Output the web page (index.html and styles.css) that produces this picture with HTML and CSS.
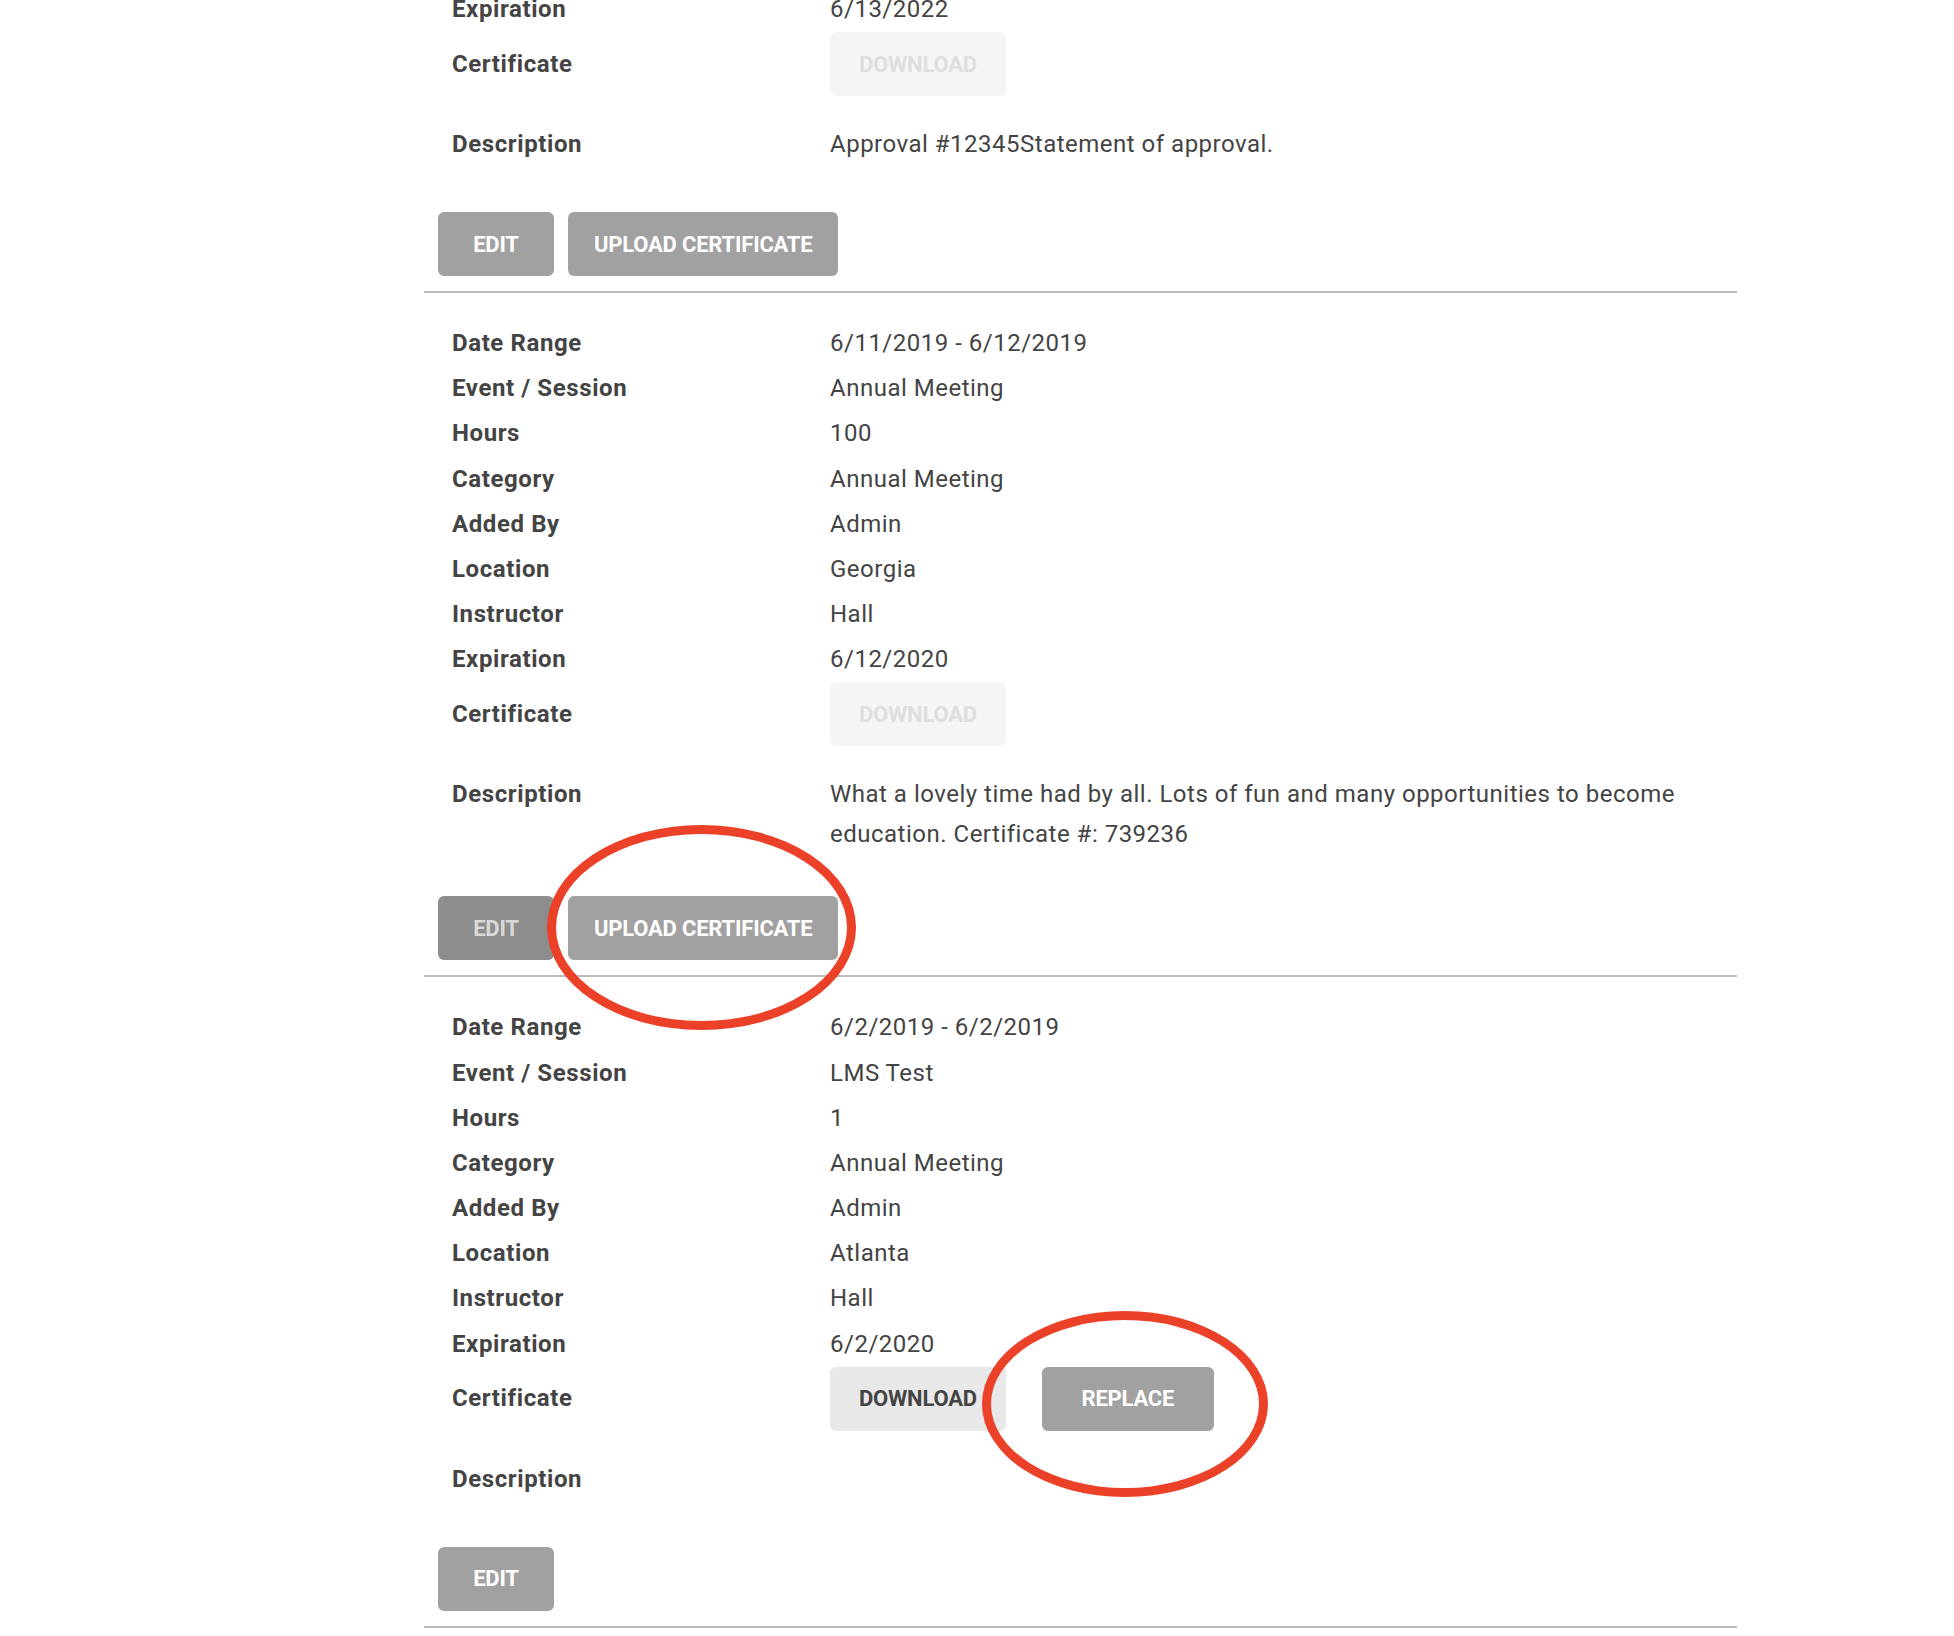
FILE: index.html
```html
<!DOCTYPE html>
<html>
<head>
	<title>Continuing Education Records</title>
	<link rel="stylesheet" href="styles.css">
</head>
<body>
	<div class="records">

		<div class="record first">
			<dl class="details">
				<div class="row"><dt>Expiration</dt><dd>6/13/2022</dd></div>
				<div class="row cert">
					<dt>Certificate</dt>
					<dd><button class="btn btn-light" disabled>Download</button></dd>
				</div>
				<div class="row desc"><dt>Description</dt><dd>Approval #12345Statement of approval.</dd></div>
			</dl>
			<div class="actions">
				<button class="btn btn-edit">Edit</button>
				<button class="btn">Upload Certificate</button>
			</div>
		</div>

		<div class="record">
			<dl class="details">
				<div class="row"><dt>Date Range</dt><dd>6/11/2019 - 6/12/2019</dd></div>
				<div class="row"><dt>Event / Session</dt><dd>Annual Meeting</dd></div>
				<div class="row"><dt>Hours</dt><dd>100</dd></div>
				<div class="row"><dt>Category</dt><dd>Annual Meeting</dd></div>
				<div class="row"><dt>Added By</dt><dd>Admin</dd></div>
				<div class="row"><dt>Location</dt><dd>Georgia</dd></div>
				<div class="row"><dt>Instructor</dt><dd>Hall</dd></div>
				<div class="row"><dt>Expiration</dt><dd>6/12/2020</dd></div>
				<div class="row cert">
					<dt>Certificate</dt>
					<dd><button class="btn btn-light" disabled>Download</button></dd>
				</div>
				<div class="row desc"><dt>Description</dt><dd>What a lovely time had by all. Lots of fun and many opportunities to become education. Certificate #: 739236</dd></div>
			</dl>
			<div class="actions">
				<button class="btn btn-edit pressed">Edit</button>
				<button class="btn">Upload Certificate<span class="ring ring-upload"></span></button>
			</div>
		</div>

		<div class="record">
			<dl class="details">
				<div class="row"><dt>Date Range</dt><dd>6/2/2019 - 6/2/2019</dd></div>
				<div class="row"><dt>Event / Session</dt><dd>LMS Test</dd></div>
				<div class="row"><dt>Hours</dt><dd>1</dd></div>
				<div class="row"><dt>Category</dt><dd>Annual Meeting</dd></div>
				<div class="row"><dt>Added By</dt><dd>Admin</dd></div>
				<div class="row"><dt>Location</dt><dd>Atlanta</dd></div>
				<div class="row"><dt>Instructor</dt><dd>Hall</dd></div>
				<div class="row"><dt>Expiration</dt><dd>6/2/2020</dd></div>
				<div class="row cert">
					<dt>Certificate</dt>
					<dd class="cert-btns">
						<button class="btn btn-light">Download</button>
						<button class="btn">Replace<span class="ring ring-replace"></span></button>
					</dd>
				</div>
				<div class="row desc"><dt>Description</dt><dd></dd></div>
			</dl>
			<div class="actions">
				<button class="btn btn-edit">Edit</button>
			</div>
		</div>

	</div>
</body>
</html>
```

FILE: styles.css
```css
body {
	margin: 0;
	background: #fff;
	font-family: Roboto, "Liberation Sans", sans-serif;
	color: #444;
	overflow: hidden;
}

.records {
	width: 1313px;
	margin-left: 424px;
}

.record {
	padding: 28px 14px 15px;
	border-bottom: 2px solid #bdbdbd;
}
.record.first {
	margin-top: -13px;  /*page is scrolled, top of this record is out of view*/
	padding-top: 0;
}

.details {
	margin: 0;
	padding-left: 14px;
}

.row {
	display: flex;
	font-size: 24px;
	line-height: 45.15px;
}
.row dt {
	width: 378px;
	flex: none;
	font-weight: 700;
	letter-spacing: 0.6px;
}
.row dd {
	margin: 0;
	flex: 1;
	letter-spacing: 0.5px;
}

.row.cert {
	align-items: center;
	height: 64px;
}
.row.desc {
	align-items: baseline;  /*label lines up with first line of text*/
	margin-top: 22px;
}
.row.desc dt {
	line-height: 52px;
}
.row.desc dd {
	line-height: 40px;
}

.cert-btns {
	display: flex;
	gap: 36px;
}

.actions {
	display: flex;
	gap: 14px;
	margin-top: 42px;
}

/* buttons */
.btn {
	position: relative;
	height: 64px;
	padding: 0 26px;
	border: 0;
	border-radius: 6px;
	background: #a1a1a1;
	color: #fff;
	font-family: Roboto, "Liberation Sans", sans-serif;
	font-size: 22px;
	font-weight: 700;
	letter-spacing: -0.2px;
	text-transform: uppercase;
	cursor: pointer;
}
.btn-edit {
	min-width: 116px;
}
.btn.pressed {
	background: #8d8d8d;
	color: #d9d9d9;
}
.cert .btn {
	min-width: 172px;
	padding: 0 29px;
}
.btn-light {
	background: #e8e8e8;
	color: #444;
}
.btn-light:disabled {
	background: #f5f5f5;
	color: #dedede;
	cursor: default;
}

/* red marker rings drawn over the screenshot */
.ring {
	position: absolute;
	box-sizing: border-box;
	border: 9px solid #ec4129;
	border-radius: 50%;
	pointer-events: none;
}
.ring-upload {
	left: -21px;
	top: -71px;
	width: 309px;
	height: 205px;
}
.ring-replace {
	left: -60px;
	top: -56px;
	width: 286px;
	height: 186px;
}
```
